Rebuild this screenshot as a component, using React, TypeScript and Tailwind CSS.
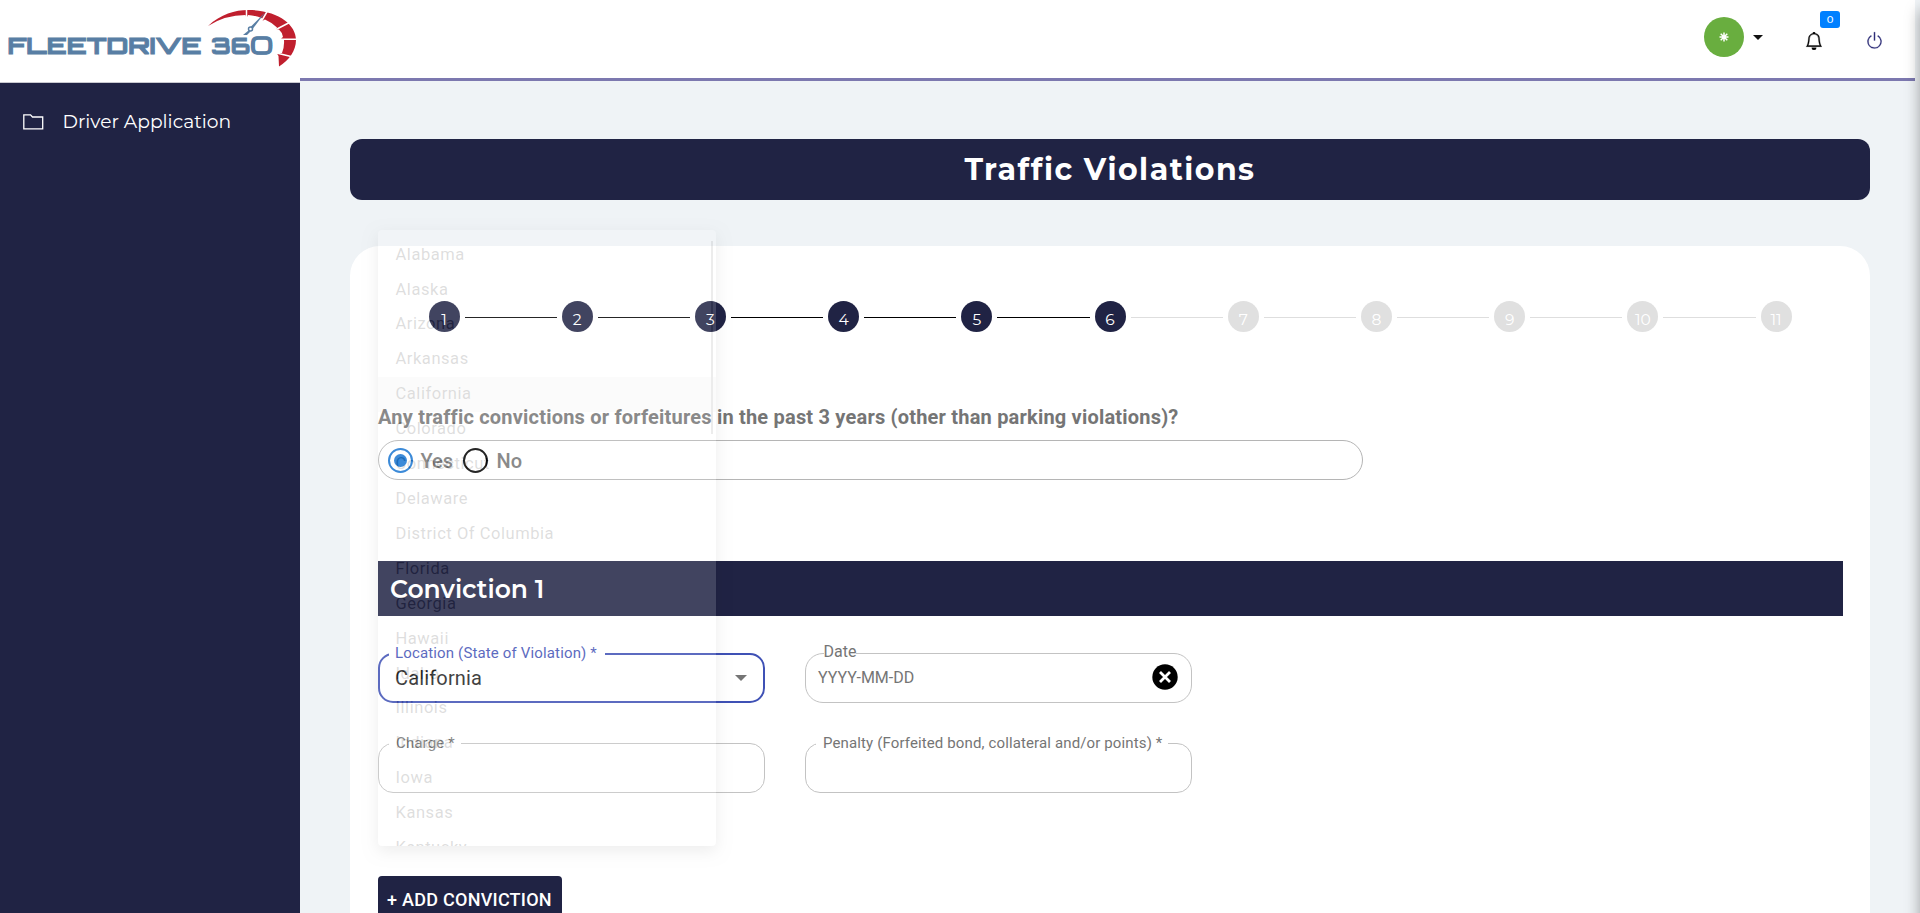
import React, { Fragment } from "react";
import { BsBell, BsPower } from "react-icons/bs";

const states = [
  "Alabama", "Alaska", "Arizona", "Arkansas", "California", "Colorado",
  "Connecticut", "Delaware", "District Of Columbia", "Florida", "Georgia",
  "Hawaii", "Idaho", "Illinois", "Indiana", "Iowa", "Kansas", "Kentucky",
];

const steps = [1, 2, 3, 4, 5, 6, 7, 8, 9, 10, 11];
const currentStep = 6;

function Logo() {
  return (
    <svg width="300" height="82" viewBox="0 0 300 82" className="block" role="img" aria-label="FleetDrive 360">
      <path
        fill="#c01f2e"
        d="M208 26C221 14 235 10 248 10C277 10 296 24 296 40C296 51 289 60 279 66.500L278.500 56L277 53.500L282 53Q284.500 47 284 40L281 38.500L283 37Q282 32 279 29.500L276 29.500L277 27.500Q271 22 265 19.500L262 21L262.500 18.500Q255 15.500 248 15L246.500 18L245.500 15Q225 15 208 26Z"
      />
      <path d="M246.500 9V19M268 10L261 22M276 29.500L289.500 22.500M277 39.300H297M276.500 53L291 56.500" stroke="#fff" strokeWidth="1.500" fill="none" />
      <path d="M265.500 12L253 28.500L250 27.500Z" fill="#587ea4" />
      <circle cx="250.500" cy="29" r="2" fill="#fff" stroke="#587ea4" strokeWidth="1.500" />
      <path d="M248.500 30.500L243 35H247L250.500 31.500Z" fill="#587ea4" />
      <g fill="#587ea4" stroke="#587ea4" strokeWidth="0.900" fontFamily="Orbitron, Inter, sans-serif" fontWeight="700" fontSize="23">
        <text x="7.500" y="54.400" textLength="194" lengthAdjust="spacingAndGlyphs">FLEETDRIVE</text>
        <text x="211" y="54.400" textLength="62" lengthAdjust="spacingAndGlyphs">
          36<tspan fontFamily="Michroma, Audiowide, Inter, sans-serif">0</tspan>
        </text>
      </g>
    </svg>
  );
}

function Sidebar() {
  return (
    <aside className="flex w-[300px] shrink-0 flex-col bg-[#202344]">
      <div className="h-[83px] border-b border-[#c9c9d0] bg-white">
        <Logo />
      </div>
      <nav className="flex h-[79px] items-center pl-[23px] text-white">
        <svg width="21" height="16" viewBox="0 0 21 16" fill="none" stroke="currentColor" strokeWidth="1.300" className="-mt-px">
          <path d="M.8 14.800V.8H7.500L9.500 3H19.700V14.800Z" />
        </svg>
        <span className="ml-[18.500px] font-[Montserrat,Inter,sans-serif] text-[18.7px]">Driver Application</span>
      </nav>
    </aside>
  );
}

function Header() {
  return (
    <header className="mr-[5px] flex h-[81px] shrink-0 border-b-[3px] border-[#7c78af] bg-white">
      <div className="ml-auto flex">
        <div className="mt-[17px] flex size-10 items-center justify-center rounded-full bg-[#69ae3f]">
          <svg width="10" height="10" viewBox="0 0 10 10" stroke="#fff" strokeWidth="1.500" className="-ml-px">
            <path d="M5 .5V9.500M.5 5H9.500M1.700 1.700L8.300 8.300M8.300 1.700L1.700 8.300" />
          </svg>
        </div>
        <svg width="10" height="5" viewBox="0 0 10 5" className="mt-[35px] ml-[9px]">
          <path d="M0 0H10L5 5Z" fill="#111" />
        </svg>
        <div className="relative mt-[32px] ml-[42px] h-[18px] w-[18px]">
          <BsBell size={18} color="#000" stroke="#000" strokeWidth={0.3} />
          <span className="absolute -top-[21px] left-[15px] flex h-[17px] w-5 items-center justify-center rounded-[3px] bg-[#0080ff] font-[Montserrat,Inter,sans-serif] text-[10px] font-medium text-white">0</span>
        </div>
        <BsPower size={19} color="#2f2f78" stroke="#2f2f78" strokeWidth={0.2} className="mt-[31px] mr-[31px] ml-[42px]" />
      </div>
    </header>
  );
}

function Stepper() {
  return (
    <div className="flex items-center px-[50.5px]">
      {steps.map((n) => (
        <Fragment key={n}>
          {n > 1 && (
            <div className={n <= currentStep ? "mx-[5px] mt-px h-px flex-1 bg-black" : "mx-[5px] mt-px h-px flex-1 bg-[#dedede]"} />
          )}
          <div
            className={
              n <= currentStep
                ? "flex size-[31px] items-center justify-center rounded-full bg-[#202344] pt-[7px] font-[Montserrat,Inter,sans-serif] text-[15.5px] text-white"
                : "flex size-[31px] items-center justify-center rounded-full bg-[#e0e0e0] pt-[7px] font-[Montserrat,Inter,sans-serif] text-[15.5px] text-white"
            }
          >
            {n}
          </div>
        </Fragment>
      ))}
    </div>
  );
}

function OutlinedField({ label, children }: { label: string; children?: React.ReactNode }) {
  return (
    <div className="relative flex h-[50px] w-[387px] items-center rounded-[15px] border border-[#c3c3c3]">
      <span className="absolute -top-[11px] left-[10px] bg-white pr-[6px] pl-[7px] text-[15px] leading-5 tracking-[0.13px] whitespace-nowrap text-[#757575]">{label}</span>
      {children}
    </div>
  );
}

function StateMenu() {
  return (
    <div className="absolute top-[230px] left-[378px] h-[616px] w-[338px] overflow-hidden rounded-[4px] bg-white pt-[7.6px] opacity-15 shadow-[0_5px_15px_rgba(0,0,0,0.45)]">
      {states.map((s) => (
        <div
          key={s}
          className={
            s === "California"
              ? "flex h-[34.92px] items-center bg-[#e6e6e6] pl-[17.5px] text-[16.5px] tracking-[0.55px] text-black/87"
              : "flex h-[34.92px] items-center pl-[17.5px] text-[16.5px] tracking-[0.55px] text-black/87"
          }
        >
          {s}
        </div>
      ))}
      <div className="absolute top-[11px] right-[3px] h-[193px] w-[2px] bg-[#888]" />
    </div>
  );
}

export default function App() {
  return (
    <div className="relative flex h-[913px] w-[1920px] overflow-hidden bg-[#eff3f6] font-[Roboto,sans-serif]">
      <Sidebar />
      <div className="flex flex-1 flex-col">
        <Header />
        <main className="ml-[50px] w-[1520px] pt-[58px]">
          <h1 className="flex h-[61px] items-center justify-center rounded-[12px] bg-[#202344] font-[Montserrat,Inter,sans-serif] text-[30px] font-bold tracking-[1.5px] text-white">
            Traffic Violations
          </h1>
          <section className="mt-[46px] h-[700px] rounded-[30px] bg-white px-[28px] pt-[55px]">
            <Stepper />
            <p className="mt-[70px] text-[20px] leading-[30px] font-bold tracking-[0.2px] whitespace-nowrap text-[#757575]">
              Any traffic convictions or forfeitures in the past 3 years (other than parking violations)?
            </p>
            <div className="mt-[8px] flex h-10 w-[985px] items-center rounded-[20px] border border-[#b5b5b5] pl-[8.5px] text-[20px] font-medium text-[#757575]">
              <span className="flex size-[25px] items-center justify-center rounded-full border-2 border-[#1976d2]">
                <span className="size-[13px] rounded-full bg-[#1976d2]" />
              </span>
              <span className="ml-[8px] w-[33px] pt-px">Yes</span>
              <span className="ml-[9px] size-[25px] rounded-full border-2 border-black" />
              <span className="ml-[9px] pt-px">No</span>
            </div>
            <h2 className="mt-[81px] flex h-[55px] w-[1465px] items-center bg-[#202344] pt-[3px] pl-[12px] font-[Montserrat,Inter,sans-serif] text-[25px] font-semibold text-white">
              Conviction 1
            </h2>
            <div className="mt-[37px] grid grid-cols-[387px_387px] gap-x-10 gap-y-10">
              <div className="relative flex h-[50px] items-center rounded-[15px] border-2 border-[#3f51b5] pr-[16px] pl-[15px]">
                <span className="absolute -top-[12px] left-[9px] bg-white pr-[8px] pl-[6px] text-[15px] leading-5 tracking-[0.15px] whitespace-nowrap text-[#3f51b5]">
                  Location (State of Violation) *
                </span>
                <span className="text-[20px] tracking-[0.15px] text-[#212121]">California</span>
                <svg width="12" height="6" viewBox="0 0 12 6" className="ml-auto">
                  <path d="M0 0H12L6 6Z" fill="#757575" />
                </svg>
              </div>
              <div className="relative flex h-[50px] items-center rounded-[18px] border border-[#c3c3c3] pr-[13px] pl-[12px]">
                <span className="absolute -top-[12px] left-[17.5px] bg-white text-[16px] leading-5 text-[#757575]">Date</span>
                <span className="text-[16px] text-[#757575]">YYYY-MM-DD</span>
                <svg width="26" height="26" viewBox="0 0 26 26" className="-mt-[3px] ml-auto">
                  <circle cx="13" cy="13" r="12.700" fill="#000" />
                  <path d="M8 8L18 18M18 8L8 18" stroke="#fff" strokeWidth="2.800" />
                </svg>
              </div>
              <OutlinedField label="Charge *" />
              <OutlinedField label="Penalty (Forfeited bond, collateral and/or points) *" />
            </div>
            <button className="mt-[83px] flex h-[47px] w-[184px] items-center justify-center rounded-[4px] bg-[#202344] pr-px text-[18px] font-medium tracking-[0.25px] whitespace-nowrap text-white">
              + ADD CONVICTION
            </button>
          </section>
        </main>
      </div>
      <StateMenu />
      <div className="absolute top-[10px] -right-[20px] h-[940px] w-[20px] shadow-[0_0_15px_rgba(0,0,0,0.35)]" />
    </div>
  );
}
